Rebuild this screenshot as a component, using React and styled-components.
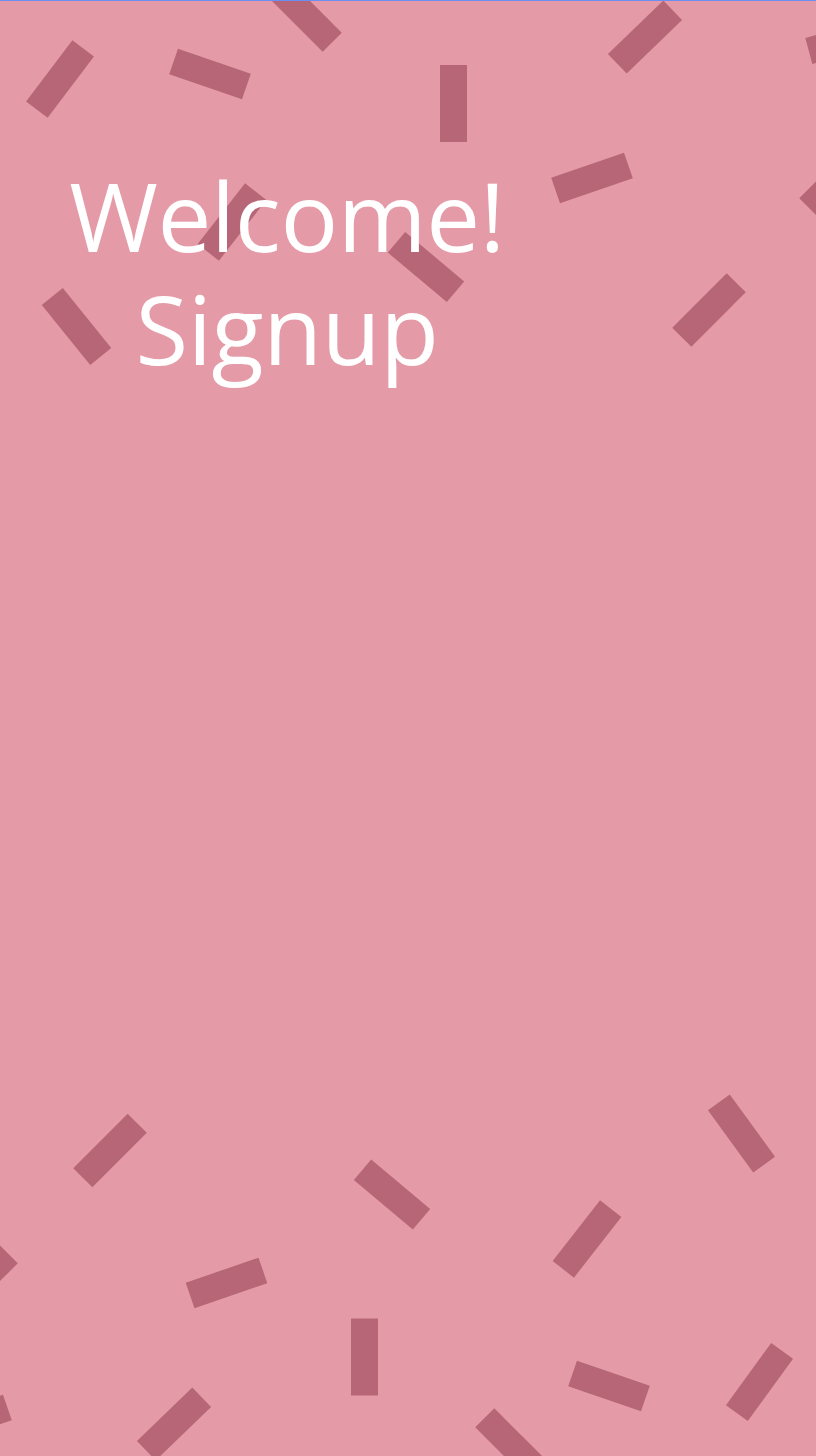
import React from "react";
import styled, { createGlobalStyle } from "styled-components";

const GlobalStyle = createGlobalStyle`
  html, body {
    margin: 0;
    padding: 0;
  }
  body {
    font-family: "Open Sans", "Liberation Sans", sans-serif;
    background: #e59aa7;
  }
`;

const Page = styled.div`
  position: relative;
  min-height: 1456px;
  box-sizing: border-box;
  border-top: 1px solid #6b8ff0;
  background: #e59aa7;
  overflow: hidden;
`;

const Confetti = styled.svg`
  position: absolute;
  inset: 0;
  width: 100%;
  height: 100%;
  z-index: 0;
  pointer-events: none;
`;

const Piece = styled.rect`
  fill: #b66676;
`;

const Hero = styled.header`
  position: relative;
  z-index: 1;
  width: 574px;
  padding-top: 157px;
  text-align: center;
`;

const Title = styled.h1`
  margin: 0;
  color: #ffffff;
  font-family: "Open Sans", "Liberation Sans", sans-serif;
  font-size: 96px;
  font-weight: 400;
  line-height: 113px;
  letter-spacing: -0.4px;
`;

const Line = styled.span`
  display: block;
  height: 113px;
`;

// x, y = centre, r = rotation in degrees
const pieces = [
  { x: 60, y: 78, r: 37 },
  { x: 210, y: 73, r: -71 },
  { x: 305, y: 14, r: -45 },
  { x: 453.5, y: 102.5, r: 0 },
  { x: 645, y: 36, r: 46 },
  { x: 846, y: 40, r: 75 },
  { x: 592, y: 177, r: 71 },
  { x: 836, y: 215, r: -45 },
  { x: 232, y: 221, r: 38 },
  { x: 426, y: 266, r: -50 },
  { x: 76.5, y: 325.5, r: -39 },
  { x: 709, y: 309, r: 45 },

  { x: 110, y: 1149.5, r: 45 },
  { x: 741.5, y: 1132.5, r: -36 },
  { x: 392, y: 1193.5, r: -50 },
  { x: 587, y: 1238, r: 38 },
  { x: -19, y: 1280, r: 45 },
  { x: 226.5, y: 1282, r: 71 },
  { x: 364.5, y: 1356, r: 0 },
  { x: 609, y: 1385, r: -71 },
  { x: 759.5, y: 1381, r: 36 },
  { x: -29, y: 1419, r: 71 },
  { x: 174, y: 1423, r: 46 },
  { x: 512, y: 1444, r: -45 },
];

const App = () => {
  return (
    <>
      <GlobalStyle />
      <Page>
        <Confetti viewBox="0 0 816 1456" preserveAspectRatio="xMinYMin slice">
          {pieces.map((p, i) => (
            <Piece
              key={i}
              x={-13.5}
              y={-38.5}
              width={27}
              height={77}
              transform={`translate(${p.x} ${p.y}) rotate(${p.r})`}
            />
          ))}
        </Confetti>
        <Hero>
          <Title>
            <Line>Welcome!</Line>
            <Line>Signup</Line>
          </Title>
        </Hero>
      </Page>
    </>
  );
};

export default App;
